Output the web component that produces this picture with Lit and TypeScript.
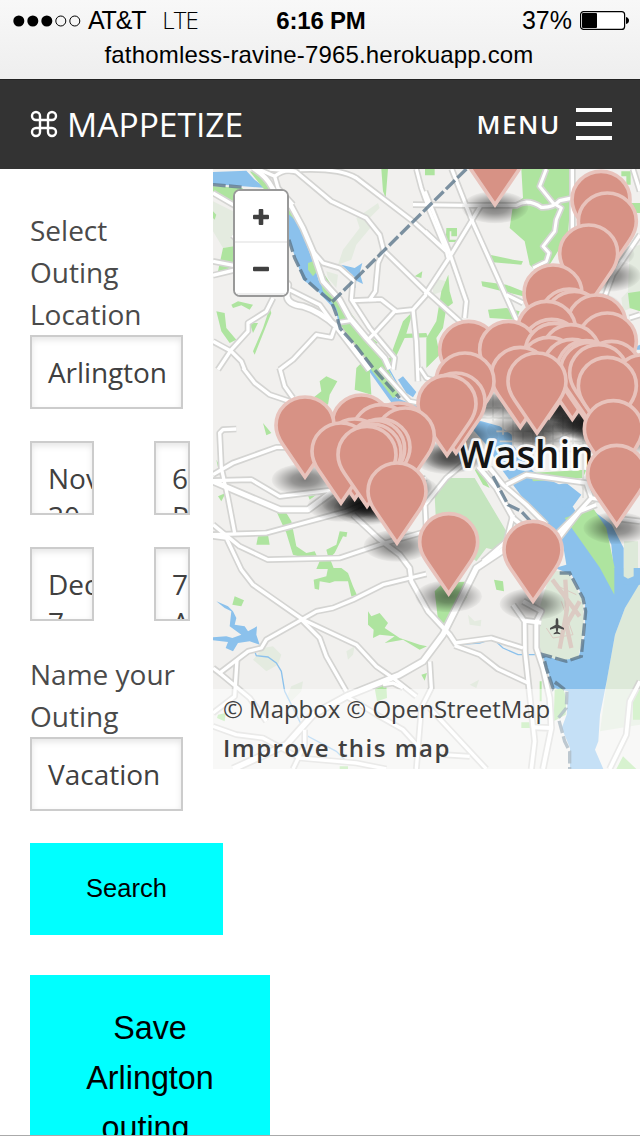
import { LitElement, html, svg, css } from "lit";
import { customElement } from "lit/decorators.js";

// Map geometry uses a 1281 x 1800 canvas, three units per CSS pixel.
type Road = [number, string];

const ROADS: Road[] = [
  [9, "M0 75 L60 110 L130 150"],
  [12, "M120 0 Q160 25 175 55 T235 115 L270 180 L300 250 L330 340 L380 395 L410 450 L460 510 L515 570 L530 603"],
  [9, "M135 3 L185 25 L195 60 L240 110"],
  [9, "M185 25 Q215 0 250 12 L355 100 L460 150 L500 200 L512 247 L640 372"],
  [9, "M170 3 L250 10 M260 5 Q380 0 430 30 L600 160 L700 250"],
  [8, "M610 3 L625 60 L650 130 L700 250 L705 270"],
  [9, "M0 280 L62 292 M0 322 L70 305"],
  [14, "M60 200 L225 350 L222 385 Q225 410 270 415 Q320 430 370 475 L470 605"],
  [9, "M230 365 L320 410 L370 480"],
  [9, "M300 250 L330 285 L380 300 L420 335 L415 395 L470 480 L545 570 L540 605"],
  [9, "M512 247 L495 285 L487 370 L470 395 L505 395 L550 430 L600 425 L640 380"],
  [9, "M420 398 L490 395 M600 425 L610 520 L615 640 M545 430 L490 490 L465 515"],
  [9, "M365 480 L355 508 L310 500 L240 575 L200 605"],
  [9, "M180 390 L160 430 L105 465 L105 490 L55 545 L15 605 M0 520 L55 550 L85 580 L95 605"],
  [8, "M380 463 L420 457"],
  [9, "M716 3 L780 165 L908 450 L930 500"],
  [9, "M636 70 L708 250 L760 400 L755 450 M708 270 L636 380 M805 110 L708 270"],
  [9, "M636 190 L700 250 M640 370 L740 460 L780 520"],
  [9, "M600 110 L760 112 L910 112 Q945 90 985 118 Q1020 120 1040 98 L1078 90"],
  [8, "M1000 3 L980 55 L1020 105 L1045 120 L1030 155 L1025 190 L990 235 L1008 255 L1000 280 L960 300"],
  [9, "M1078 3 L1078 360 M1281 200 L1200 320 L1170 400 M1260 3 L1281 70"],
  [9, "M880 380 L930 405 M1250 450 Q1281 440 1281 440"],
  [9, "M90 600 L125 645 L170 680 L230 700 M200 600 L215 655 L240 690"],
  [9, "M70 783 L30 785 L20 795 L25 900 L45 990 L65 1095 M0 920 L60 885 L190 838 L230 838"],
  [14, "M0 940 L200 1025 L285 1025 L360 970"],
  [9, "M0 938 L115 935 L200 985 L370 965"],
  [9, "M0 1100 L160 1095 L400 1030 L470 1000 L640 930"],
  [9, "M0 1070 L80 1135 L165 1175 L380 1170 L500 1130 L640 1090"],
  [9, "M0 1105 L40 1110 L85 1205 L120 1250 L270 1355 L430 1430 L490 1495 L540 1530 L610 1585"],
  [11, "M420 1040 L500 1115 L560 1160 L590 1200 L595 1240 L645 1330 L710 1400 L730 1430"],
  [9, "M640 1218 L510 1250 L420 1295 L360 1320 L310 1330 L160 1415 L145 1440 L105 1450 L20 1515 L0 1500"],
  [9, "M265 1355 L320 1410 L340 1465 L400 1570"],
  [9, "M20 1515 L110 1590 L160 1660 M72 1475 L65 1585 L0 1635 M0 1675 L70 1700 L150 1710 L260 1770 L430 1785 L520 1803"],
  [15, "M60 1803 L220 1730 L300 1640 L400 1585 L560 1520 L630 1480 L690 1400 L790 1200 L880 1140"],
  [9, "M240 1803 L275 1730 L275 1685 M400 1585 L500 1645 L570 1685 L620 1740 M510 1550 L540 1545 L570 1560"],
  [9, "M650 1480 L655 1560 L625 1620 L610 1803"],
  [9, "M725 1425 L835 1410 L930 1440 M725 1433 L800 1460 L855 1503 L945 1545 M650 1620 L820 1803 M690 1760 L770 1765"],
  [10, "M900 1310 L935 1360 L936 1450 L950 1580 L965 1720 L955 1803"],
  [11, "M930 1300 L985 1330 L970 1360 L970 1440 L990 1500 L1010 1590 L1015 1680 L990 1803 M936 1358 L985 1364 M960 1678 L1015 1680"],
  [11, "M795 895 L850 960 L900 1050 L960 1100 L1010 1140"],
  [10, "M830 900 L870 950 L940 1010 L1000 1070 M880 950 L940 920 L1120 945 L1135 990 L1090 1040 L1020 1110 M1135 990 L1200 1000"],
  [10, "M1030 1120 L1100 1030 L1150 1010 M900 1040 L880 1120 L810 1180"],
  [9, "M636 1010 L700 930 L760 880 M636 1010 L640 1090"],
  [10, "M1281 1540 L1250 1600 L1240 1700 L1190 1803 M1200 1050 L1281 1060"],
  [8, "M500 600 L590 700 L700 720 M620 600 L640 630 L700 650"],
];

// Small downtown streets.
const STREETS =
  "M840 680V760M870 700V800M900 690V880M930 740V880M960 770V880M990 770V880M1020 770V880M1050 740V880M1080 740V880M1110 760V990M800 720H900M780 750H1130M850 790H1130M860 820H1130M880 850H1130M900 870L1130 770";

const GREENS = [
  "M110 10L150 20L262 170L322 300L380 390L440 470L525 600L560 680L540 690L470 600L385 475L370 420L330 370L290 230L250 160L170 85Z",
  "M285 285L300 280L312 310L300 325L285 305Z",
  "M0 55L90 60L60 100L0 70Z M30 240L62 235V285L35 315L15 310Z M0 130L10 140L5 155L0 150Z",
  "M505 3H525L518 90L510 70Z M55 410L75 400L120 410L110 425L85 412L60 420Z M10 430L35 435L40 480L70 515L50 525L25 490Z M110 465L135 465L120 495Z M170 420L175 435L125 560L120 550L150 480Z",
  "M600 430L570 460L530 570L510 575L540 585L575 510L645 508L640 495L580 497Z M605 325L628 310L625 330Z M465 500L495 525L480 530L460 515Z M430 600L450 580L470 600L475 680L425 665Z",
  "M925 3H1078L1070 130L1065 200L1010 290L965 305L950 290L935 220L890 180L900 110L930 90Z",
  "M636 3H665V22H636Z M700 180H732V205H715V190H710V215H730V222H698Z M830 260L900 275L930 280L925 290L840 283Z M805 340L880 350L930 370V385L850 365L808 355Z M825 425L880 420L920 430L910 455L830 450Z",
  "M706 320L710 370L720 405L700 420L690 480L670 510L680 560L640 600V510L670 460L685 370Z M1225 10H1253V50H1240V25H1225Z M1220 105H1281V135H1260Z M1245 375L1281 370V430L1250 420Z",
  "M320 640L340 625L373 640L350 680L345 710L300 690L325 670Z M150 765L175 795L160 802Z M10 875L24 900L15 898Z M15 985L38 975L25 1000Z M280 970L310 980L290 995Z",
  "M190 1030L220 1035L235 1060L250 1135L280 1155L305 1150L312 1165L345 1165L340 1145L370 1130L380 1090L403 1093L400 1107L390 1105L365 1155L350 1170L363 1203H310L320 1180L275 1170L240 1160L220 1095Z M135 1105L165 1100L170 1130H130Z",
  "M345 1200H385L405 1215L420 1255L432 1282L415 1285L405 1240L365 1240L350 1245L320 1240L318 1265L305 1262L302 1235L340 1225Z",
  "M65 1285L93 1297L85 1315L58 1310Z M465 1330L475 1345L500 1335L525 1365L515 1380L560 1410L620 1430L642 1435L620 1445L570 1415L515 1425L545 1405L500 1400L480 1410L482 1385L465 1370Z M625 1520L642 1515L635 1538Z M485 1560L520 1550L522 1590L492 1600Z M15 1640L38 1635L35 1660L12 1650Z",
  "M665 1270L690 1245L778 1240L760 1290L700 1370L675 1355Z M843 1235L870 1240L873 1270L850 1265Z M1025 1565L1050 1560L1060 1590L1058 1640L1022 1660Z M980 1540H986V1600H980Z M925 1663H960V1680H925Z M380 1795H405V1803H380Z M1210 1803L1230 1765L1270 1803Z M1281 1560L1260 1600V1655H1281Z",
  "M950 915L1120 905L1110 930L960 940Z M1055 1050L1140 1020L1180 1080L1205 1200L1165 1205Z M1161 1200H1204V1280Z M1240 1130H1258V1165H1240Z M785 905L800 900L830 960L810 950Z",
];

const PARKS = [
  "M0 100L60 130V235L30 240L0 190Z M495 105L500 120L470 150L480 170L430 230L415 275L375 290L390 245L440 180L430 150Z M340 310L375 320L370 360L345 330Z",
  "M1250 240L1281 230V410L1230 430L1225 390L1245 370Z M660 330L700 340L690 370L660 380Z",
  "M665 985L700 930L785 930L880 1090L860 1150L820 1140L790 1180L670 1080Z",
  "M150 1440L180 1435L205 1460L195 1490L160 1510L120 1475Z M235 1555L270 1540L265 1570L235 1600L220 1590Z M400 1450L425 1435L420 1460L405 1475Z M770 1550L798 1535L790 1560Z M765 1340L785 1360L805 1355L803 1375L770 1370Z",
];

// Marker tips, back to front.
const PINS: [number, number][] = [
  [846, 118], [1164, 258], [1183, 323], [1127, 419], [1020, 539], [1069, 611],
  [1084, 618], [1151, 629], [1001, 648], [1183, 683], [1016, 702], [767, 708],
  [887, 708], [1024, 714], [1074, 718], [1008, 756], [1078, 762], [1120, 766],
  [1196, 768], [1130, 771], [1157, 778], [922, 786], [756, 803], [972, 803],
  [1290, 808], [1183, 816], [729, 863], [702, 870], [445, 929], [276, 935],
  [1201, 946], [557, 953], [505, 958], [577, 968], [504, 1001], [425, 1001],
  [488, 1005], [384, 1013], [477, 1016], [462, 1023], [1211, 1080],
  [552, 1133], [707, 1285], [960, 1308],
];

@customElement("outing-map")
class OutingMap extends LitElement {
  static styles = css`
    :host { display: grid; width: 427px; height: 600px; overflow: hidden; font-family: "Open Sans", sans-serif; }
    .canvas, .overlay { grid-area: 1 / 1; min-width: 0; }
    .canvas { width: 427px; height: 600px; display: block; }
    .land { fill: #f1f0ee; }
    .park { fill: #dde9d9; }
    .faint { fill: #e4ebe0; }
    .reserve { fill: #c5e5bf; }
    .green { fill: #aee49f; }
    .water { fill: #8bc1ec; }
    .creek { fill: none; stroke: #8bc1ec; stroke-width: 4; }
    .casing { fill: none; stroke: #d4d4d2; stroke-linejoin: round; }
    .road { fill: none; stroke: #fff; stroke-linejoin: round; }
    .street { fill: none; stroke: #dededc; stroke-width: 5; }
    .border { fill: none; stroke: #5e788c; stroke-opacity: 0.8; stroke-width: 10; stroke-dasharray: 38 10; }
    .runway { fill: none; stroke: #dccbc3; stroke-width: 13; }
    .fine { stroke-width: 3; }
    .plane { fill: #4b4b4b; }
    .city { font: 600 115px "Open Sans", sans-serif; fill: #151515; stroke: #fff; stroke-width: 16; stroke-opacity: 0.9; stroke-linejoin: round; paint-order: stroke; }
    .pin { fill: #d79285; stroke: #e8c3bc; stroke-width: 11; }
    .overlay { display: flex; flex-direction: column; justify-content: space-between; align-items: stretch; z-index: 1; }
    .zoom { box-sizing: border-box; width: 56px; height: 108px; margin: 20px 0 0 20px; border: 2px solid #999; border-radius: 7px; background: #fff; display: flex; flex-direction: column; overflow: hidden; }
    .step { box-sizing: border-box; height: 52px; flex: none; border: 0; border-bottom: 2px solid #eee; background: #fff; padding: 2px 0 0; display: grid; place-items: center; }
    .glyph { width: 16px; height: 16px; fill: #404040; display: block; }
    .credit { box-sizing: border-box; height: 80px; padding: 0 10px; background: rgba(255, 255, 255, 0.5); color: #404040; font-size: 24px; line-height: 40px; white-space: nowrap; }
    .line { line-height: 39px; letter-spacing: -0.04px; }
    .improve { font-weight: 600; letter-spacing: 1.48px; }
  `;

  render() {
    return html`
      <svg class="canvas" viewBox="0 3 1281 1800" role="img" aria-label="Map of Washington">
        <defs>
          <radialGradient id="shade">
            <stop offset="0" stop-color="#000" stop-opacity=".48"></stop>
            <stop offset=".4" stop-color="#000" stop-opacity=".38"></stop>
            <stop offset=".8" stop-color="#000" stop-opacity=".14"></stop>
            <stop offset="1" stop-color="#000" stop-opacity=".03"></stop>
          </radialGradient>
          <clipPath id="tile"><rect x="700" y="760" width="433" height="151"></rect></clipPath>
        </defs>
        <rect class="land" width="1281" height="1803"></rect>
        ${PARKS.map((d, i) => svg`<path class=${i === 2 ? "reserve" : "faint"} d=${d}></path>`)}
        <path class="park" d="M1281 1240V1670L1161 1690L1181 1540L1206 1400L1236 1320Z"></path>
        <path class="water" d="M0 12L100 8L125 35L165 65L228 125L265 190L300 280L318 340L345 375L375 420L385 475L430 535L490 600L550 690L700 745L806 760L860 775L896 800L900 830L960 910L1040 950L1100 1050L1145 1120L1175 1200H1281V1245L1236 1320L1206 1400L1181 1540L1161 1640L1156 1720L1146 1745L1171 1803H1071L1071 1740L1046 1680L1061 1640L1066 1570L1021 1560L1001 1500L986 1460L1036 1475L1096 1470L1116 1400V1300L1076 1220L1026 1200L1060 1190L1050 1130L966 1040L870 910L820 830L780 785L700 770L540 710L465 605L380 490L370 430L310 365L270 335L228 215L160 60L0 48Z"></path>
        <path class="water" d="M1006 955L1060 945L1105 980L1080 1015L1050 1020L1030 980Z M1130 1020L1196 1070L1232 1140V1220H1203L1195 1130L1165 1070Z M1230 1200H1281V1250H1230Z"></path>
        <path class="water" d="M10 1300L45 1315L60 1330L70 1350L65 1370L95 1375L105 1390L132 1375L130 1400L140 1430L110 1420L75 1425L60 1450L38 1440L45 1422L0 1417V1408L40 1405L58 1410L85 1400L50 1375L55 1330L35 1320Z M385 290L425 300L448 285L440 315L450 348L430 338L428 360L415 355L418 320Z M555 635L570 625L610 672L600 688L580 675Z M1271 535L1281 530V545L1271 545Z"></path>
        ${GREENS.map((d) => svg`<path class="green" d=${d}></path>`)}
        <path class="park" d="M1232 1200H1262V1225L1245 1232L1232 1225Z M1233 1120H1275V1200H1233Z"></path>
        <path class="creek" d="M125 1450L130 1463L165 1467L190 1485L205 1510L215 1570L235 1610L260 1660L285 1705L370 1750L410 1790M730 1430L800 1425L840 1412L870 1440L915 1460H980M235 115L280 195L310 280L330 345L380 400L420 470L480 535L520 590L560 660"></path>
        <path class="park" d="M1015 1205L1066 1215L1110 1300L1112 1390L1095 1470L1036 1478L980 1450L982 1310Z"></path>
        <path class="runway" d="M1057 1235L1062 1325L1040 1442M1018 1235L1100 1345M1100 1300L1060 1370L1075 1440"></path>
        <path class="runway fine" d="M1000 1380L1020 1410L1080 1400L1045 1300M1025 1250L1090 1280"></path>
        <path class="street" d=${STREETS}></path>
        ${ROADS.map(([w, d]) => svg`<path class="casing" stroke-width=${w + 11} d=${d}></path>`)}
        ${ROADS.map(([w, d]) => svg`<path class="road" stroke-width=${w + 1} d=${d}></path>`)}
        <path class="border" d="M760 3L357 402"></path>
        <path class="border" d="M0 50L95 58M228 215L245 270L275 332L320 372L355 400L370 440L382 482L430 535L480 600L560 690M840 925L885 1010L925 1030L980 1090M1040 1215L1070 1215L1110 1290L1118 1330L1105 1465L1060 1480L990 1460L1000 1500L1020 1560L1030 1545L1062 1570L1060 1620L1036 1650L1055 1720L1070 1750V1803"></path>
        <path class="plane" d="M1032 1350Q1036 1350 1036 1358V1370L1053 1380V1385L1036 1380L1034 1391L1042 1396V1399L1032 1397L1022 1399V1396L1030 1391L1028 1380L1011 1385V1380L1028 1370V1358Q1028 1350 1032 1350Z"></path>
        ${PINS.map(([x, y]) => svg`<ellipse cx=${x} cy=${y} rx="100" ry="48" fill="url(#shade)"></ellipse>`)}
        <text class="city" x="735" y="899" clip-path="url(#tile)">Washin</text>
        ${PINS.map(([x, y]) => svg`<path class="pin" transform="translate(${x} ${y})" d="M0 -8L-67 -106Q-87 -135 -87 -163A87 85 0 0 1 87 -163Q87 -135 67 -106Z"></path>`)}
      </svg>
      <div class="overlay">
        <div class="zoom">
          <button class="step" aria-label="Zoom in"><svg class="glyph" viewBox="0 0 16 16"><rect x="0" y="5.7" width="16" height="4.6" rx="1"></rect><rect x="5.7" y="0" width="4.6" height="16" rx="1"></rect></svg></button>
          <button class="step" aria-label="Zoom out"><svg class="glyph" viewBox="0 0 16 16"><rect x="0" y="5.7" width="16" height="4.6" rx="1"></rect></svg></button>
        </div>
        <div class="credit">
          <div class="line">© Mapbox © OpenStreetMap</div>
          <div class="improve">Improve this map</div>
        </div>
      </div>
    `;
  }
}

@customElement("app-root")
class AppRoot extends LitElement {
  static styles = css`
    :host { display: flex; flex-direction: column; width: 640px; height: 1136px; overflow: hidden; background: #fff; font-family: "Open Sans", sans-serif; color: #4a4a4a; box-sizing: border-box; border-bottom: 1px solid #aaa; }
    .chrome { flex: none; height: 79px; background: linear-gradient(#f8f8f8, #eee); color: #000; font-family: "Liberation Sans", sans-serif; }
    .status { display: grid; grid-template-columns: 1fr auto 1fr; height: 41px; align-items: center; padding: 0 11px 0 13px; font-size: 25px; line-height: 41px; }
    .carrier, .power { display: flex; align-items: center; }
    .carrier { letter-spacing: -1.2px; }
    .power { justify-content: flex-end; gap: 8px; }
    .signal { width: 68px; height: 12px; margin-right: 7px; flex: none; }
    .network { margin-left: 17px; letter-spacing: -0.8px; font-size: 24px; line-height: 38px; padding-bottom: 2px; font-family: "Open Sans", sans-serif; font-weight: 300; }
    .clock { font-weight: 700; font-size: 24px; letter-spacing: -0.2px; }
    .battery { width: 49px; height: 19px; flex: none; }
    .address { text-align: center; font-size: 24px; line-height: 28px; letter-spacing: 0.17px; padding-right: 2px; }
    .bar { box-sizing: border-box; flex: none; height: 90px; border-top: 1px solid #222; background: #333; color: #fff; display: flex; align-items: center; justify-content: space-between; padding: 0 28px 1px 30px; }
    .brand { display: flex; align-items: center; gap: 9px; font-size: 33.6px; font-weight: 400; }
    .command { width: 28px; height: 28px; fill: none; stroke: #fff; stroke-width: 2.4; }
    .menu { display: flex; align-items: center; gap: 15px; font-weight: 600; font-size: 26px; letter-spacing: 1.6px; }
    .burger { width: 36px; height: 32px; box-sizing: border-box; display: flex; flex-direction: column; justify-content: space-between; }
    .rung { height: 4px; background: #fff; }
    .page { display: grid; grid-template-columns: 213px 427px; align-items: start; }
    .form { display: flex; flex-direction: column; align-items: flex-start; padding: 40px 0 0 30px; font-size: 28px; }
    .label { line-height: 42px; width: 153px; }
    .second { margin-top: 32px; }
    .field { box-sizing: border-box; width: 153px; height: 74px; border: 2px solid #ccc; padding: 16px; line-height: 38px; box-shadow: inset 0 3px 6px rgba(0, 0, 0, 0.1); color: #404040; overflow: hidden; background: #fff; white-space: nowrap; }
    .place { letter-spacing: -0.1px; padding-right: 10px; }
    .when { display: flex; gap: 60px; margin-top: 32px; }
    .date { width: 64px; white-space: normal; padding-right: 0; }
    .time { width: 36px; white-space: normal; padding-right: 0; }
    .button { box-sizing: border-box; border: 0; background: #0ff; color: #000; font-family: "Liberation Sans", sans-serif; text-align: center; flex: none; }
    .search { width: 193px; height: 92px; margin-top: 32px; padding: 0 0 2px; font-size: 25.5px; }
    .save { width: 240px; height: 206px; margin-top: 40px; padding: 28px 50px; font-size: 32.3px; line-height: 50px; }
  `;

  render() {
    return html`
      <div class="chrome">
        <div class="status">
          <div class="carrier">
            <svg class="signal" viewBox="0 0 68 12">
              ${[0, 1, 2, 3, 4].map((i) => svg`<circle cx=${5.8 + i * 14} cy="6" r=${i < 3 ? 5.5 : 5} fill=${i < 3 ? "#000" : "none"} stroke=${i < 3 ? "none" : "#000"}></circle>`)}
            </svg>
            <span>AT&amp;T</span><span class="network">LTE</span>
          </div>
          <div class="clock">6:16 PM</div>
          <div class="power">
            <span>37%</span>
            <svg class="battery" viewBox="0 0 49 19">
              <rect x=".6" y=".6" width="44" height="17.8" rx="3" fill="#fff" stroke="#000" stroke-width="1.2"></rect>
              <rect x="2" y="2" width="15" height="15" rx="1"></rect>
              <path d="M46 6Q49 7 49 9.5T46 13Z"></path>
            </svg>
          </div>
        </div>
        <div class="address">fathomless-ravine-7965.herokuapp.com</div>
      </div>
      <header class="bar">
        <div class="brand">
          <svg class="command" viewBox="0 0 28 28"><path d="M10 10V6A4 4 0 1 0 6 10H22A4 4 0 1 0 18 6V22A4 4 0 1 0 22 18H6A4 4 0 1 0 10 22Z"></path></svg>
          <span class="name">MAPPETIZE</span>
        </div>
        <div class="menu"><span>MENU</span><div class="burger"><div class="rung"></div><div class="rung"></div><div class="rung"></div></div></div>
      </header>
      <main class="page">
        <div class="form">
          <div class="label">Select Outing Location</div>
          <div class="field place">Arlington</div>
          <div class="when"><div class="field date">Nov 30</div><div class="field time">6 PM</div></div>
          <div class="when"><div class="field date">Dec 7</div><div class="field time">7 AM</div></div>
          <div class="label second">Name your Outing</div>
          <div class="field">Vacation</div>
          <button class="button search">Search</button>
          <button class="button save">Save Arlington outing.</button>
        </div>
        <outing-map></outing-map>
      </main>
    `;
  }
}
